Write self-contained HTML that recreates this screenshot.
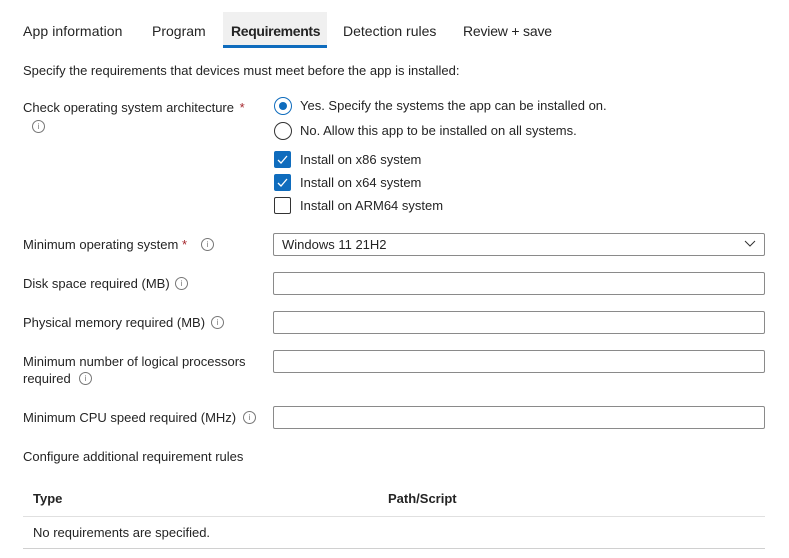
<!DOCTYPE html><html><head><style>
body{margin:0;width:789px;height:558px;background:#fff;font-family:"Liberation Sans",sans-serif;font-size:13px;color:#242424;position:relative;overflow:hidden}
.a{position:absolute;white-space:nowrap;line-height:16px}
.i{position:absolute;width:11px;height:11px;border:1px solid #777;border-radius:50%;font-size:8px;line-height:11px;text-align:center;color:#777}
.in{position:absolute;left:273px;width:490px;height:21px;border:1px solid #8a8a8a;border-radius:2px;background:#fff}
.cb{position:absolute;left:274px;width:17px;height:17px;box-sizing:border-box;border-radius:2px}
.cb.on{background:#0f6cbd}
.cb.off{border:1px solid #333}
.st{color:#a4262c}
</style></head><body>
<div style="position:absolute;left:223px;top:12px;width:104px;height:35px;background:#f0f0f0"></div>
<div style="position:absolute;left:223px;top:45px;width:104px;height:3px;background:#0f6cbd"></div>
<div class="a" style="left:23px;top:23px;font-size:14px;letter-spacing:0.1px">App information</div>
<div class="a" style="left:152px;top:23px;font-size:14px">Program</div>
<div class="a" style="left:231px;top:23px;font-size:14px;font-weight:bold;letter-spacing:-0.35px">Requirements</div>
<div class="a" style="left:343px;top:23px;font-size:14px">Detection rules</div>
<div class="a" style="left:463px;top:23px;font-size:14px;letter-spacing:-0.2px">Review + save</div>
<div class="a" style="left:23px;top:63px">Specify the requirements that devices must meet before the app is installed:</div>
<div class="a" style="left:23px;top:100px">Check operating system architecture <span class="st" style="margin-left:2px">*</span></div>
<div class="i" style="left:32px;top:120px">i</div>
<div style="position:absolute;left:274px;top:97px;width:16px;height:16px;border:1px solid #0f6cbd;border-radius:50%"></div>
<div style="position:absolute;left:279px;top:102px;width:8px;height:8px;background:#0f6cbd;border-radius:50%"></div>
<div class="a" style="left:300px;top:98px">Yes. Specify the systems the app can be installed on.</div>
<div style="position:absolute;left:274px;top:122px;width:16px;height:16px;border:1px solid #333;border-radius:50%"></div>
<div class="a" style="left:300px;top:123px">No. Allow this app to be installed on all systems.</div>
<div class="cb on" style="top:151px"><svg width="17" height="17"><path d="M4 9l3 3 6-7" stroke="#fff" stroke-width="1.3" fill="none"/></svg></div>
<div class="a" style="left:300px;top:152px">Install on x86 system</div>
<div class="cb on" style="top:174px"><svg width="17" height="17"><path d="M4 9l3 3 6-7" stroke="#fff" stroke-width="1.3" fill="none"/></svg></div>
<div class="a" style="left:300px;top:175px">Install on x64 system</div>
<div class="cb off" style="top:197px"></div>
<div class="a" style="left:300px;top:198px">Install on ARM64 system</div>

<div class="a" style="left:23px;top:237px">Minimum operating system <span class="st">*</span></div>
<div class="i" style="left:201px;top:238px">i</div>
<div class="in" style="top:233px"><span class="a" style="left:8px;top:3px">Windows 11 21H2</span>
<svg style="position:absolute;right:8px;top:6px" width="12" height="8"><path d="M1 1l5 5 5-5" stroke="#333" fill="none"/></svg></div>

<div class="a" style="left:23px;top:276px">Disk space required (MB)</div>
<div class="i" style="left:175px;top:277px">i</div>
<div class="in" style="top:272px"></div>
<div class="a" style="left:23px;top:315px">Physical memory required (MB)</div>
<div class="i" style="left:211px;top:316px">i</div>
<div class="in" style="top:311px"></div>
<div class="a" style="left:23px;top:354px">Minimum number of logical processors</div>
<div class="a" style="left:23px;top:371px">required</div>
<div class="i" style="left:79px;top:372px">i</div>
<div class="in" style="top:350px"></div>
<div class="a" style="left:23px;top:410px">Minimum CPU speed required (MHz)</div>
<div class="i" style="left:243px;top:411px">i</div>
<div class="in" style="top:406px"></div>
<div class="a" style="left:23px;top:449px">Configure additional requirement rules</div>
<div class="a" style="left:33px;top:491px;font-weight:bold">Type</div>
<div class="a" style="left:388px;top:491px;font-weight:bold">Path/Script</div>
<div style="position:absolute;left:23px;top:516px;width:742px;height:1px;background:#e0e0e0"></div>
<div class="a" style="left:33px;top:525px">No requirements are specified.</div>
<div style="position:absolute;left:23px;top:548px;width:742px;height:1px;background:#d0d0d0"></div>
</body></html>
